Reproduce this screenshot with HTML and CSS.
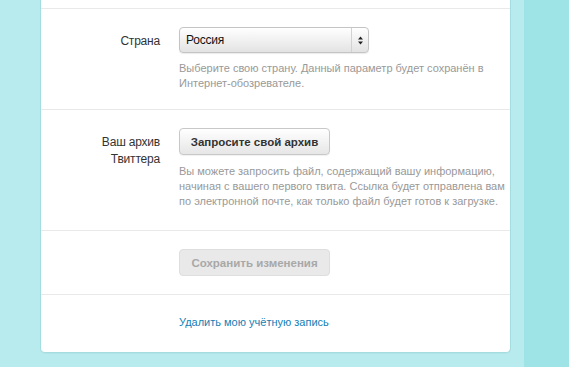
FILE: index.html
```html
<!DOCTYPE html>
<html lang="ru">
<head>
    <meta charset="UTF-8">
    <title>Настройки учётной записи</title>
    <link rel="stylesheet" href="styles.css">
</head>
<body>
    <div class="page">
        <div class="main">
            <div class="card">
                <div class="section-tail"></div>

                <div class="form-row">
                    <label class="row-label" for="country">Страна</label>
                    <div class="row-control">
                        <div class="select" id="country">
                            <span class="select-value">Россия</span>
                            <span class="select-arrows">
                                <svg width="5" height="9" viewBox="0 0 5 9">
                                    <path d="M2.5 0.5 L5 3.6 L0 3.6 Z" fill="#222"/>
                                    <path d="M2.5 8.5 L5 5.4 L0 5.4 Z" fill="#222"/>
                                </svg>
                            </span>
                        </div>
                        <p class="help">Выберите свою страну. Данный параметр будет сохранён в<br>Интернет-обозревателе.</p>
                    </div>
                </div>

                <div class="form-row archive">
                    <div class="row-label">Ваш архив<br>Твиттера</div>
                    <div class="row-control">
                        <button class="btn">Запросите свой архив</button>
                        <p class="help">Вы можете запросить файл, содержащий вашу информацию,<br>начиная с вашего первого твита. Ссылка будет отправлена вам<br>по электронной почте, как только файл будет готов к загрузке.</p>
                    </div>
                </div>

                <div class="form-row actions">
                    <div class="row-label"></div>
                    <div class="row-control">
                        <button class="btn" disabled>Сохранить изменения</button>
                    </div>
                </div>

                <div class="form-row footer">
                    <div class="row-label"></div>
                    <div class="row-control">
                        <a href="#" class="delete-link">Удалить мою учётную запись</a>
                    </div>
                </div>
            </div>
        </div>
        <div class="side"></div>
    </div>
</body>
</html>
```

FILE: styles.css
```css
* {
    margin: 0;
    padding: 0;
    box-sizing: border-box;
}

body {
    font-family: 'Liberation Sans', Arial, sans-serif;
    font-size: 12px;
    color: #333;
    background: #b8ebee;
    height: 367px;
    overflow: hidden;
}

.page {
    display: flex;
    height: 367px;
}

.main {
    width: 524px;
    padding-left: 40px;
}

.side {
    flex: 1;
    background: #9ee3e6;
}

.card {
    width: 471px;
    background: #fff;
    border: 1px solid #a3dde0;
    border-top: none;
    border-radius: 0 0 5px 5px;
    box-shadow: 0 1px 0 rgba(0, 0, 0, 0.03);
}

.section-tail {
    height: 8px;
}

.form-row {
    display: flex;
    border-top: 1px solid #e9e9e9;
    padding: 18px 0 18px;
}

.row-label {
    width: 119px;
    text-align: right;
    font-size: 12px;
    letter-spacing: -0.2px;
    line-height: 17px;
    padding-top: 6px;
    color: #333;
}

.row-control {
    margin-left: 19px;
    flex: 1;
}

.select {
    display: flex;
    width: 190px;
    height: 26px;
    border: 1px solid #c4c4c4;
    border-radius: 4px;
    background: linear-gradient(#ffffff, #e3e3e3);
    box-shadow: 0 1px 1px rgba(0, 0, 0, 0.08);
}

.select-value {
    flex: 1;
    padding-left: 6px;
    line-height: 24px;
    font-size: 12px;
    letter-spacing: -0.2px;
    color: #111;
}

.select-arrows {
    width: 17px;
    border-left: 1px solid #d2d2d2;
    display: flex;
    align-items: center;
    justify-content: center;
}

.help {
    margin-top: 8px;
    color: #999;
    font-size: 11px;
    line-height: 15px;
    white-space: nowrap;
}

.btn {
    display: block;
    width: 151px;
    height: 27px;
    border: 1px solid #c8c8c8;
    border-radius: 4px;
    background: linear-gradient(#ffffff, #e6e6e6);
    font-family: inherit;
    font-size: 11.5px;
    font-weight: bold;
    color: #333;
    box-shadow: 0 1px 1px rgba(0, 0, 0, 0.06);
}

.btn:disabled {
    background: #e9e9e9;
    border-color: #dedede;
    color: #a8a8a8;
    box-shadow: none;
}

.archive .help {
    margin-top: 9px;
}

.form-row.archive {
    padding-bottom: 21px;
}

.form-row.actions {
    padding-bottom: 18px;
}

.form-row.footer {
    padding: 20px 0 22px;
}

.delete-link {
    display: block;
    color: #1580b5;
    text-decoration: none;
    font-size: 11px;
    line-height: 15px;
}
```
